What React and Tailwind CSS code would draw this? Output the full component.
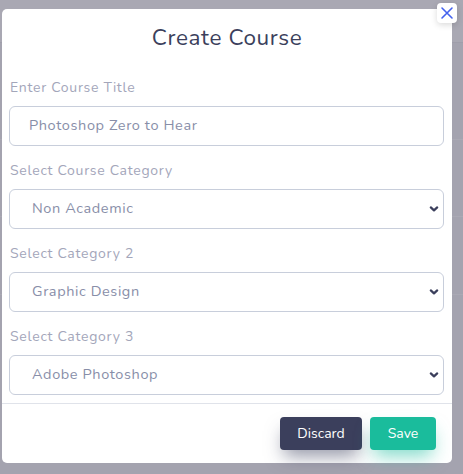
import React from 'react';

const font = { fontFamily: '"Nunito", "Lato", "Open Sans", sans-serif' };

const Chevron = () => (
  <svg width="12" height="12" viewBox="0 0 12 12" className="absolute right-[3px] top-1/2 -translate-y-1/2 pointer-events-none">
    <path d="M2.8 4.4 L6 7.4 L9.2 4.4" fill="none" stroke="#3b3f5c" strokeWidth="2.2" strokeLinecap="round" strokeLinejoin="round" />
  </svg>
);

const Field = ({ label, value, select }) => (
  <div>
    <div className="text-[14px] leading-[20px] tracking-[0.7px] text-[#a3a6ba] pl-[1px]">{label}</div>
    <div className="relative mt-[8px] h-[40px] rounded-[6px] border border-[#c8cedb] bg-white flex items-center">
      <span className={`text-[14.5px] tracking-[0.6px] text-[#888ea8] ${select ? 'pl-[22px]' : 'pl-[19px]'}`}>{value}</span>
      {select && <Chevron />}
    </div>
  </div>
);

export default function App() {
  return (
    <div className="relative w-full h-[474px] overflow-hidden bg-[#a4a3af]" style={font}>
      {/* page behind the overlay */}
      <div className="h-[43px] bg-[#a9a8b3] border-b border-[#9f9eaa]" />
      <div className="h-[97px] border-b border-[#aaa9b4]" />
      <div className="h-[77px] border-b border-[#aaa9b4]" />
      <div className="h-[78px] border-b border-[#aaa9b4]" />

      {/* Modal */}
      <div className="absolute left-[2px] top-[9px] w-[450px] h-[454px] bg-white rounded-[5px] flex flex-col">
        <h2 className="text-center text-[22.5px] leading-[30px] tracking-[0.6px] text-[#3b3f5c] mt-[14px]">Create Course</h2>

        <div className="px-[7px] pr-[8px] mt-[25px] flex flex-col gap-[15px]">
          <Field label="Enter Course Title" value="Photoshop Zero to Hear" />
          <Field label="Select Course Category" value="Non Academic" select />
          <Field label="Select Category 2" value="Graphic Design" select />
          <Field label="Select Category 3" value="Adobe Photoshop" select />
        </div>

        <div className="mt-[8px] border-t border-[#e0e3ea]" />

        <div className="flex justify-end gap-[8px] pr-[16px] mt-[13px]">
          <button className="w-[82px] h-[33px] rounded-[4px] bg-[#3b3f5c] text-white text-[14px] shadow-[0_10px_18px_-4px_rgba(59,63,92,0.55)]">Discard</button>
          <button className="w-[66px] h-[33px] rounded-[4px] bg-[#1abc9c] text-white text-[14px] shadow-[0_10px_18px_-4px_rgba(26,188,156,0.55)]">Save</button>
        </div>
      </div>

      {/* Close button */}
      <button className="absolute left-[437px] top-[3px] w-[20px] h-[20px] bg-white rounded-[4px] shadow-[0_2px_6px_rgba(0,0,0,0.15)] flex items-center justify-center">
        <svg width="14" height="14" viewBox="0 0 14 14">
          <path d="M2 2 L12 12 M12 2 L2 12" stroke="#4361ee" strokeWidth="1.6" strokeLinecap="round" />
        </svg>
      </button>
    </div>
  );
}
